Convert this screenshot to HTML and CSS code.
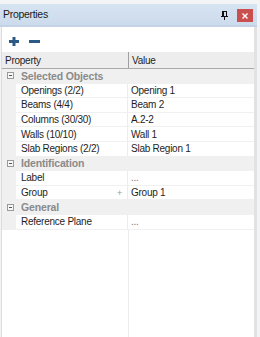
FILE: index.html
```
<!DOCTYPE html>
<html>
<head>
<meta charset="utf-8">
<link rel="stylesheet" href="styles.css">
</head>
<body>
<div class="window">
  <div class="titlebar">
    <span class="title">Properties</span>
    <span class="pin">
      <svg width="7" height="9" viewBox="0 0 7 9"><rect x="1" y="0" width="2" height="5" fill="#111"/><rect x="1" y="0" width="5" height="1" fill="#111"/><rect x="5" y="0" width="1" height="5" fill="#111"/><rect x="0" y="5" width="7" height="1" fill="#111"/><rect x="3" y="6" width="1" height="3" fill="#111"/></svg>
    </span>
    <span class="close">
      <svg width="6" height="6" viewBox="0 0 6 6"><path d="M0.5 0.5L5.5 5.5M5.5 0.5L0.5 5.5" stroke="#fff" stroke-width="1.4"/></svg>
    </span>
  </div>
  <div class="panel">
    <div class="toolbar">
      <svg class="tool" width="10" height="9" viewBox="0 0 10 9"><rect x="0" y="3" width="10" height="3" fill="#2c5a87"/><rect x="3.5" y="0" width="3" height="9" fill="#2c5a87"/></svg>
      <svg class="tool minus" width="11" height="9" viewBox="0 0 11 9"><rect x="0" y="3" width="11" height="3" fill="#2c5a87"/></svg>
    </div>
    <div class="grid">
      <div class="header">
        <div class="h-prop">Property</div>
        <div class="h-val">Value</div>
      </div>
      <div class="row cat"><span class="toggle"></span><span class="cat-name">Selected Objects</span></div>
      <div class="row"><span class="margin"></span><span class="name">Openings (2/2)</span><span class="value">Opening 1</span></div>
      <div class="row"><span class="margin"></span><span class="name">Beams (4/4)</span><span class="value">Beam 2</span></div>
      <div class="row"><span class="margin"></span><span class="name">Columns (30/30)</span><span class="value">A.2-2</span></div>
      <div class="row"><span class="margin"></span><span class="name">Walls (10/10)</span><span class="value">Wall 1</span></div>
      <div class="row"><span class="margin"></span><span class="name">Slab Regions (2/2)</span><span class="value">Slab Region 1</span></div>
      <div class="row cat"><span class="toggle"></span><span class="cat-name">Identification</span></div>
      <div class="row"><span class="margin"></span><span class="name">Label</span><span class="value dots">...</span></div>
      <div class="row"><span class="margin"></span><span class="name">Group<span class="plus">+</span></span><span class="value">Group 1</span></div>
      <div class="row cat"><span class="toggle"></span><span class="cat-name">General</span></div>
      <div class="row"><span class="margin"></span><span class="name">Reference Plane</span><span class="value dots">...</span></div>
      <div class="filler"><span class="fill-left"></span><span class="fill-right"></span></div>
    </div>
  </div>
</div>
</body>
</html>
```
FILE: styles.css
```
html, body {
  margin: 0;
  padding: 0;
  height: 100%;
}
body {
  background: #f3f4f6;
  font-family: "Liberation Sans", Arial, sans-serif;
  font-size: 10px;
  letter-spacing: -0.25px;
  color: #1e1e1e;
  overflow: hidden;
}
.window {
  width: 257px;
  height: 337px;
  padding-top: 4px;
  box-sizing: border-box;
  display: flex;
  flex-direction: column;
}
.titlebar {
  height: 21px;
  flex: none;
  background: linear-gradient(#d7e3f1, #ccdbec);
  border-bottom: 2px solid #c3d2e4;
  display: flex;
  align-items: center;
  padding-left: 3px;
  padding-right: 4px;
}
.title {
  font-size: 10.5px;
  letter-spacing: -0.3px;
  color: #1b1b1b;
  flex: 1;
  padding-bottom: 1px;
}
.pin {
  display: flex;
  margin-right: 9px;
  margin-top: 1px;
}
.close {
  width: 16px;
  height: 13px;
  background: #c9504f;
  display: flex;
  align-items: center;
  justify-content: center;
  margin-top: 2px;
}
.panel {
  flex: 1;
  margin-left: 1px;
  border-left: 1px solid #dcdcdc;
  border-right: 3px solid #e2e2e2;
  background: #fff;
  display: flex;
  flex-direction: column;
}
.toolbar {
  height: 25px;
  flex: none;
  display: flex;
  align-items: flex-start;
  padding-left: 7px;
  padding-top: 10px;
  box-sizing: border-box;
}
.tool { display: block; }
.minus { margin-left: 10px; }
.grid {
  flex: 1;
  display: flex;
  flex-direction: column;
}
.header {
  height: 17px;
  flex: none;
  box-sizing: border-box;
  background: #ededed;
  border-bottom: 1px solid #a9a9a9;
  display: flex;
  align-items: center;
}
.h-prop {
  width: 127px;
  padding-left: 3px;
  box-sizing: border-box;
  border-right: 1px solid #a0a0a0;
  height: 100%;
  display: flex;
  align-items: center;
}
.h-val {
  padding-left: 3px;
}
.row {
  height: 14.6px;
  flex: none;
  box-sizing: border-box;
  border-bottom: 1px solid #f0f0f0;
  display: flex;
  align-items: center;
}
.row.cat {
  background: #f0f0f0;
  border-bottom-color: #f0f0f0;
}
.toggle {
  width: 7px;
  height: 7px;
  box-sizing: border-box;
  border: 1px solid #9a9a9a;
  margin-left: 5px;
  margin-right: 7px;
  position: relative;
  background: #f7f7f7;
}
.toggle::after {
  content: "";
  position: absolute;
  left: 1px;
  right: 1px;
  top: 2px;
  height: 1px;
  background: #555;
}
.cat-name {
  font-weight: bold;
  font-size: 10.5px;
  letter-spacing: -0.15px;
  color: #8a8a8a;
}
.margin {
  width: 14px;
  align-self: stretch;
  background: #f0f0f0;
  flex: none;
}
.name {
  width: 112px;
  flex: none;
  align-self: stretch;
  display: flex;
  align-items: center;
  padding-left: 5px;
  box-sizing: border-box;
  border-right: 1px solid #ececec;
  position: relative;
}
.plus {
  position: absolute;
  right: 5px;
  color: #9a9a9a;
  font-size: 9px;
}
.value {
  padding-left: 3px;
}
.dots {
  color: #777;
}
.filler {
  flex: 1;
  display: flex;
}
.fill-left {
  width: 126px;
  border-right: 1px solid #ececec;
}
```
